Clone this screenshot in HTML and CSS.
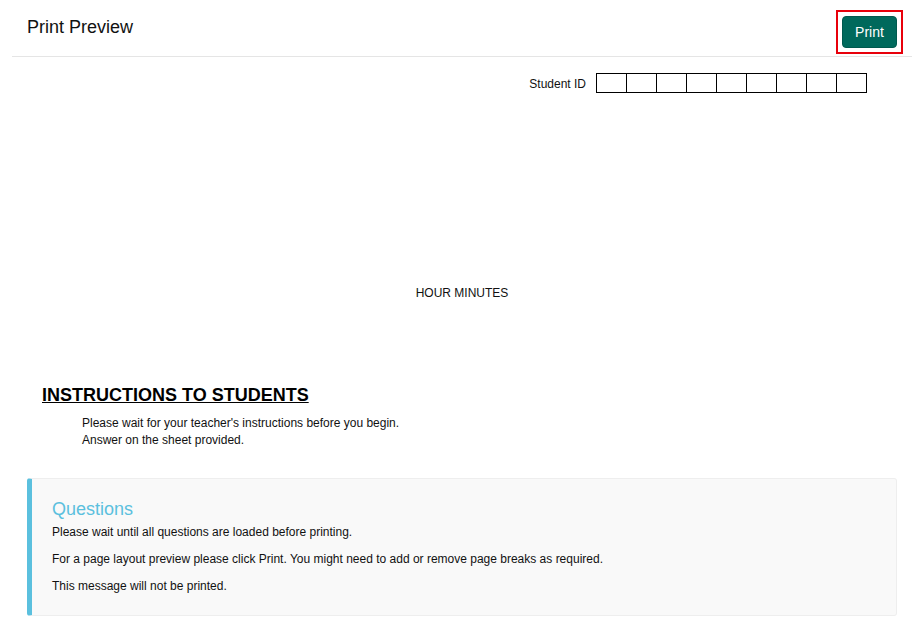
FILE: index.html
```html
<!DOCTYPE html>
<html lang="en">
<head>
<meta charset="utf-8">
<title>Print Preview</title>
<link rel="stylesheet" href="styles.css">
</head>
<body>
<div class="page">
  <header class="header">
    <h1 class="title">Print Preview</h1>
    <div class="print-outline">
      <button class="print-btn" type="button">Print</button>
    </div>
  </header>

  <div class="student-row">
    <span class="student-label">Student ID</span>
    <div class="id-boxes">
      <span class="id-cell"></span><span class="id-cell"></span><span class="id-cell"></span>
      <span class="id-cell"></span><span class="id-cell"></span><span class="id-cell"></span>
      <span class="id-cell"></span><span class="id-cell"></span><span class="id-cell"></span>
    </div>
  </div>

  <div class="time-row">HOUR MINUTES</div>

  <section class="instructions">
    <h2 class="instructions-title">INSTRUCTIONS TO STUDENTS</h2>
    <div class="instructions-body">
      <div>Please wait for your teacher's instructions before you begin.</div>
      <div>Answer on the sheet provided.</div>
    </div>
  </section>

  <div class="callout">
    <h4 class="callout-title">Questions</h4>
    <p>Please wait until all questions are loaded before printing.</p>
    <p>For a page layout preview please click Print. You might need to add or remove page breaks as required.</p>
    <p>This message will not be printed.</p>
  </div>
</div>
</body>
</html>
```

FILE: styles.css
```css
html, body {
  margin: 0;
  padding: 0;
  background: #fff;
}

body {
  font-family: "Liberation Sans", Arial, sans-serif;
  font-size: 12px;
  line-height: 17px;
  color: #111;
}

.page {
  margin: 0 8px 0 12px;
}

.header {
  display: flex;
  justify-content: space-between;
  align-items: flex-start;
  height: 56px;
  border-bottom: 1px solid #e5e5e5;
  padding: 0 9px 0 15px;
}

.title {
  margin: 0;
  padding-top: 17px;
  font-size: 18px;
  line-height: 20px;
  font-weight: normal;
  color: #111;
}

.print-outline {
  margin-top: 10px;
  border: 2px solid #e8000b;
  padding: 4px;
  display: flex;
}

.print-btn {
  width: 55px;
  height: 32px;
  padding: 0;
  border: 1px solid #00594e;
  border-radius: 4px;
  background: #00695c;
  color: #fff;
  font-family: "Liberation Sans", Arial, sans-serif;
  font-size: 14px;
}

.student-row {
  display: flex;
  justify-content: flex-end;
  align-items: center;
  margin-top: 16px;
  padding-right: 45px;
}

.student-label {
  margin-right: 10px;
  padding-top: 2px;
}

.id-boxes {
  display: flex;
  border: 1px solid #000;
}

.id-cell {
  width: 29px;
  height: 18px;
  border-left: 1px solid #000;
}

.id-cell:first-child {
  border-left: none;
}

.time-row {
  margin-top: 192px;
  text-align: center;
}

.instructions {
  margin-top: 83px;
  padding-left: 30px;
}

.instructions-title {
  margin: 0;
  font-size: 18px;
  line-height: 20px;
  font-weight: bold;
  text-decoration: underline;
  color: #000;
}

.instructions-body {
  margin-top: 10px;
  padding-left: 40px;
}

.callout {
  margin: 29px 15px 0 15px;
  padding: 20px;
  border: 1px solid #eee;
  border-left: 5px solid #5bc0de;
  border-radius: 3px;
  background: #f9f9f9;
}

.callout-title {
  margin: 0 0 5px;
  font-size: 18px;
  line-height: 20px;
  font-weight: normal;
  color: #5bc0de;
}

.callout p {
  margin: 0 0 10px;
}

.callout p:last-child {
  margin-bottom: 0;
}
```
